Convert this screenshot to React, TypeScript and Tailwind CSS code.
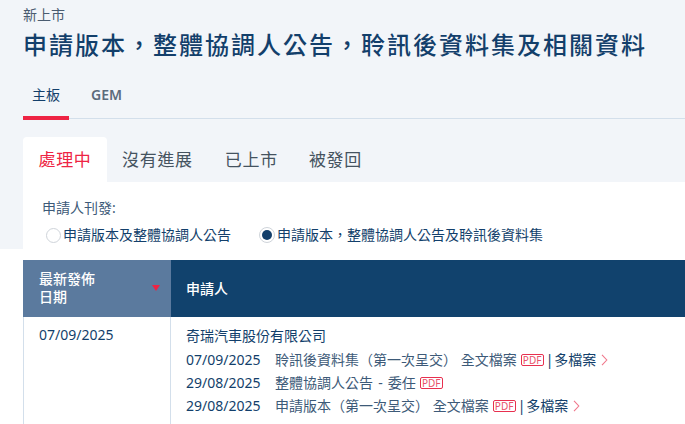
import type { ReactNode } from 'react';

const FONT = { fontFamily: "'Noto Sans', 'Noto Sans CJK TC', sans-serif" };

function Pdf() {
  return (
    <span className="mr-[2px] ml-[4px] inline-flex h-[12px] w-[23px] items-center justify-center rounded-[2px] border border-[#e8304f] text-[10px] leading-none text-[#e8506a]">
      PDF
    </span>
  );
}

function Chevron() {
  return (
    <svg width="7" height="12" viewBox="0 0 7 12" className="ml-[5px] inline-block" fill="none" stroke="#f0788c" strokeWidth="1.1">
      <path d="M1 .8 5.8 6 1 11.2" />
    </svg>
  );
}

function Row({ date, text, files }: { date: string; text: ReactNode; files?: boolean }) {
  return (
    <div className="flex h-[23px] items-center whitespace-nowrap text-[14px] text-[#133f6b]">
      <span className="w-[89px]">{date}</span>
      <span className="text-[#3d5a78]">{text}</span>
      <Pdf />
      {files && (
        <>
          <span>|</span>
          <span className="ml-[1px]">多檔案</span>
          <Chevron />
        </>
      )}
    </div>
  );
}

export default function App() {
  return (
    <div lang="zh-TW" className="h-[424px] w-[685px] overflow-hidden bg-white" style={FONT}>
      <div className="h-[249px] bg-[#f2f5f9] pl-[23px]">
        <div className="pt-[6px] text-[14px] leading-[18px] text-[#4a5c70]">新上市</div>
        <h1 className="mt-[3px] text-[24px] leading-[36px] font-medium tracking-[2px] whitespace-nowrap text-[#133f6b]">
          申請版本，整體協調人公告，聆訊後資料集及相關資料
        </h1>

        {/* board tabs */}
        <div className="flex h-[56px] border-b border-[#d3dfeb]">
          <div className="flex h-[57px] w-[46px] shrink-0 items-start justify-center border-b-[4px] border-[#ee2444] pt-[23px] text-[14px] leading-[18px] text-[#133f6b]">主板</div>
          <div className="ml-[22px] pt-[23px] text-[14px] leading-[18px] font-semibold text-[#5c6b7c]">GEM</div>
        </div>

        {/* status tabs */}
        <div className="mt-[18px] flex h-[45px] items-stretch text-[17px] tracking-[0.7px] text-[#45535f]">
          <div className="flex w-[84px] items-center justify-center rounded-t-[4px] bg-white text-[#ee2444]">處理中</div>
          <div className="ml-[15px] flex items-center">沒有進展</div>
          <div className="ml-[32px] flex items-center">已上市</div>
          <div className="ml-[31px] flex items-center">被發回</div>
        </div>

        <div className="h-[67px] bg-white pt-[17px] pl-[19px] text-[14px] text-[#133f6b]">
          <div className="leading-[18px] text-[#3d5a78]">申請人刊發:</div>
          <div className="mt-[9px] flex items-center leading-[18px]">
            <span className="ml-[4px] h-[15px] w-[15px] rounded-full border border-[#cfd4da] bg-white" />
            <span className="ml-[2px]">申請版本及整體協調人公告</span>
            <span className="ml-[28px] flex h-[16px] w-[16px] items-center justify-center rounded-full border border-[#cfd4da] bg-white">
              <span className="h-[10px] w-[10px] rounded-full bg-[#133f6b]" />
            </span>
            <span className="ml-[2px] whitespace-nowrap">申請版本，整體協調人公告及聆訊後資料集</span>
          </div>
        </div>
      </div>

      {/* table */}
      <div className="ml-[23px] mt-[11px]">
        <div className="flex h-[57px] text-[14px] font-medium text-white">
          <div className="relative w-[148px] bg-[#5b7a9e] pt-[10px] pl-[16px] leading-[18px]">
            最新發佈
            <br />
            日期
            <span className="absolute top-[25px] right-[11px] h-0 w-0 border-x-[4px] border-t-[6px] border-x-transparent border-t-[#ee2444]" />
          </div>
          <div className="flex flex-1 items-center bg-[#11426d] pl-[15px]">申請人</div>
        </div>
        <div className="flex h-[110px]">
          <div className="w-[148px] border-r border-l border-[#d3dfeb] pt-[8px] pl-[15px] text-[14px] leading-[20px] text-[#133f6b]">07/09/2025</div>
          <div className="flex-1 pt-[9px] pl-[15px]">
            <div className="mb-[2px] text-[14px] leading-[20px] text-[#133f6b]">奇瑞汽車股份有限公司</div>
            <Row date="07/09/2025" text="聆訊後資料集（第一次呈交） 全文檔案" files />
            <Row date="29/08/2025" text={<>整體協調人公告<span className="mx-[1.5px]"> - </span>委任</>} />
            <Row date="29/08/2025" text="申請版本（第一次呈交） 全文檔案" files />
          </div>
        </div>
      </div>
    </div>
  );
}
